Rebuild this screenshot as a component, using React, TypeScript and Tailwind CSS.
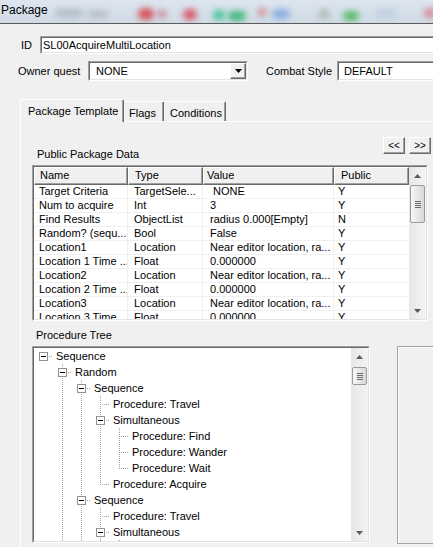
import React from "react";

const DOT_V =
  "bg-[image:repeating-linear-gradient(to_bottom,#a0a0a0_0px,#a0a0a0_1px,transparent_1px,transparent_2px)]";
const DOT_H =
  "bg-[image:repeating-linear-gradient(to_right,#a0a0a0_0px,#a0a0a0_1px,transparent_1px,transparent_2px)]";

// Blurred shapes showing through the glass caption
const glassSpots = [
  "left-[55px] top-[9px] w-[28px] h-[8px] bg-[#7b8794] opacity-40",
  "left-[88px] top-[10px] w-[20px] h-[8px] bg-[#8a8f96] opacity-40",
  "left-[138px] top-[8px] w-[16px] h-[12px] bg-[#d8323a] opacity-80",
  "left-[158px] top-[10px] w-[8px] h-[8px] bg-[#c04050] opacity-60",
  "left-[183px] top-[9px] w-[14px] h-[11px] bg-[#d83040] opacity-75",
  "left-[213px] top-[10px] w-[12px] h-[10px] bg-[#20c080] opacity-80",
  "left-[228px] top-[11px] w-[18px] h-[10px] bg-[#20b060] opacity-80",
  "left-[258px] top-[8px] w-[8px] h-[8px] bg-[#d04848] opacity-60",
  "left-[272px] top-[9px] w-[18px] h-[10px] bg-[#5a8ede] opacity-60",
  "left-[318px] top-[9px] w-[12px] h-[10px] bg-[#8a9a8a] opacity-50",
  "left-[343px] top-[11px] w-[16px] h-[10px] bg-[#30b040] opacity-75",
  "left-[375px] top-[8px] w-[22px] h-[10px] bg-[#b4c6dc] opacity-60",
  "left-[424px] top-[8px] w-[12px] h-[10px] bg-[#d05060] opacity-60",
];

const tableRows: [string, string, string, string][] = [
  ["Target Criteria", "TargetSele...", " NONE", "Y"],
  ["Num to acquire", "Int", "3", "Y"],
  ["Find Results", "ObjectList", "radius 0.000[Empty]", "N"],
  ["Random? (sequ...", "Bool", "False", "Y"],
  ["Location1", "Location", "Near editor location, ra...", "Y"],
  ["Location 1 Time ...", "Float", "0.000000", "Y"],
  ["Location2", "Location", "Near editor location, ra...", "Y"],
  ["Location 2 Time ...", "Float", "0.000000", "Y"],
  ["Location3", "Location", "Near editor location, ra...", "Y"],
  ["Location 3 Time ...", "Float", "0.000000", "Y"],
];

const colWidths = ["w-[94px]", "w-[75px]", "w-[131px]", "w-[75px]"];
const headPad = ["pl-[5px]", "pl-[6px]", "pl-[3px]", "pl-[6px]"];
const cellPad = ["pl-[5px]", "pl-[6px]", "pl-[7px]", "pl-[4px]"];
const headers = ["Name", "Type", "Value", "Public"];

type TreeItem = {
  label: string;
  level: number;
  button?: boolean;
  top?: boolean;
  bottom?: boolean;
  rails: number[];
};

const treeItems: TreeItem[] = [
  { label: "Sequence", level: 0, button: true, rails: [] },
  { label: "Random", level: 1, button: true, top: true, bottom: true, rails: [] },
  { label: "Sequence", level: 2, button: true, top: true, bottom: true, rails: [1] },
  { label: "Procedure: Travel", level: 3, top: true, bottom: true, rails: [1, 2] },
  { label: "Simultaneous", level: 3, button: true, top: true, bottom: true, rails: [1, 2] },
  { label: "Procedure: Find", level: 4, top: true, bottom: true, rails: [1, 2, 3] },
  { label: "Procedure: Wander", level: 4, top: true, bottom: true, rails: [1, 2, 3] },
  { label: "Procedure: Wait", level: 4, top: true, rails: [1, 2, 3] },
  { label: "Procedure: Acquire", level: 3, top: true, rails: [1, 2] },
  { label: "Sequence", level: 2, button: true, top: true, bottom: true, rails: [1] },
  { label: "Procedure: Travel", level: 3, top: true, bottom: true, rails: [1, 2] },
  { label: "Simultaneous", level: 3, button: true, top: true, bottom: true, rails: [1, 2] },
  { label: "Procedure: Find", level: 4, top: true, bottom: true, rails: [1, 2, 3] },
];

function Sunken({ className, children }: { className?: string; children?: React.ReactNode }) {
  return (
    <div
      className={`border border-t-[#a0a0a0] border-l-[#a0a0a0] border-r-white border-b-white ${className ?? ""}`}
    >
      <div className="h-full w-full border border-t-[#696969] border-l-[#696969] border-r-[#e3e3e3] border-b-[#e3e3e3] overflow-hidden">
        {children}
      </div>
    </div>
  );
}

function Raised({ className, children }: { className?: string; children?: React.ReactNode }) {
  return (
    <div
      className={`flex items-center justify-center border border-t-white border-l-white border-r-[#696969] border-b-[#696969] bg-[#f0f0f0] shadow-[inset_-1px_-1px_0_#a0a0a0] ${className ?? ""}`}
    >
      {children}
    </div>
  );
}

function Arrow({ up }: { up?: boolean }) {
  return (
    <svg width="7" height="4" viewBox="0 0 7 4">
      {up ? (
        <path d="M0 4 L3.5 0 L7 4 Z" fill="#5b5b5b" />
      ) : (
        <path d="M0 0 L7 0 L3.5 4 Z" fill="#5b5b5b" />
      )}
    </svg>
  );
}

function ScrollBar({ thumbTop, thumbH }: { thumbTop: string; thumbH: string }) {
  return (
    <div className="flex h-full w-[17px] shrink-0 flex-col bg-gradient-to-r from-[#e6e6e6] to-[#f4f4f4]">
      <div className="flex h-[17px] shrink-0 items-center justify-center">
        <Arrow up />
      </div>
      <div className="flex-1">
        <div
          className={`${thumbTop} ${thumbH} mx-[1px] flex flex-col items-center justify-center gap-[1px] rounded-[2px] border border-[#9a9a9a] bg-gradient-to-r from-[#f7f7f7] to-[#d8d8d8]`}
        >
          <div className="h-px w-[6px] bg-[#6a6a6a]" />
          <div className="h-px w-[6px] bg-[#6a6a6a]" />
          <div className="h-px w-[6px] bg-[#6a6a6a]" />
          <div className="h-px w-[6px] bg-[#6a6a6a]" />
        </div>
      </div>
      <div className="flex h-[17px] shrink-0 items-center justify-center">
        <Arrow />
      </div>
    </div>
  );
}

function DataTable() {
  return (
    <Sunken className="ml-[11px] h-[156px] w-[396px] bg-white">
      <div className="flex h-full bg-white">
        <div className="w-[375px] overflow-hidden">
          <div className="flex h-[18px] bg-[#f0f0f0]">
            {headers.map((h, i) => (
              <div
                key={h}
                className={`${colWidths[i]} ${headPad[i]} h-full shrink-0 border-l border-t border-l-white border-t-white border-r border-b border-r-[#696969] border-b-[#696969] shadow-[inset_-1px_-1px_0_#a0a0a0] leading-[15px]`}
              >
                {h}
              </div>
            ))}
          </div>
          {tableRows.map((r, ri) => (
            <div key={ri} className="flex h-[14px] border-b border-[#f0f0f0]">
              {r.map((c, ci) => (
                <div
                  key={ci}
                  className={`${colWidths[ci]} ${cellPad[ci]} shrink-0 overflow-hidden whitespace-pre leading-[13px] ${
                    ci < 3 ? "border-r border-[#f0f0f0]" : ""
                  }`}
                >
                  {c}
                </div>
              ))}
            </div>
          ))}
        </div>
        <ScrollBar thumbTop="mt-[1px]" thumbH="h-[38px]" />
      </div>
    </Sunken>
  );
}

function TreeRow({ item }: { item: TreeItem }) {
  const cols = Array.from({ length: item.level + 1 }, (_, i) => i);
  return (
    <div className="flex h-[16px] shrink-0 items-center">
      {cols.map((c) => (
        <div key={c} className="relative h-full w-[19px] shrink-0">
          {c < item.level && item.rails.includes(c) && (
            <div className={`absolute left-[9px] top-0 h-full w-px ${DOT_V}`} />
          )}
          {c === item.level && (
            <>
              {item.top && <div className={`absolute left-[9px] top-0 h-[8px] w-px ${DOT_V}`} />}
              {item.bottom && (
                <div className={`absolute left-[9px] top-[8px] h-[8px] w-px ${DOT_V}`} />
              )}
              <div className={`absolute left-[9px] top-[8px] h-px w-[10px] ${DOT_H}`} />
              {item.button && (
                <div className="absolute left-[5px] top-[4px] h-[9px] w-[9px] border border-[#919191] bg-white">
                  <div className="absolute left-[1px] top-[3px] h-px w-[5px] bg-black" />
                </div>
              )}
            </>
          )}
        </div>
      ))}
      <span className="ml-[3px] whitespace-nowrap leading-[16px]">{item.label}</span>
    </div>
  );
}

function ProcedureTree() {
  return (
    <Sunken className="ml-[11px] h-[197px] w-[338px] bg-white">
      <div className="flex h-full bg-white">
        <div className="flex w-[317px] flex-col overflow-hidden">
          {treeItems.map((it, i) => (
            <TreeRow key={i} item={it} />
          ))}
        </div>
        <ScrollBar thumbTop="mt-[2px]" thumbH="h-[18px]" />
      </div>
    </Sunken>
  );
}

export default function App() {
  return (
    <div className="relative h-[547px] w-[433px] overflow-hidden bg-[#f0f0f0] font-['Liberation_Sans','Arial',sans-serif] text-[11px] text-black">
      {/* caption */}
      <div className="relative h-[24px] overflow-hidden border-b border-[#5b5b5b] bg-gradient-to-b from-[#dde6ef] to-[#cfdae5]">
        {glassSpots.map((s, i) => (
          <div key={i} className={`absolute rounded-full blur-[3px] ${s}`} />
        ))}
        <span className="relative pl-[1px] text-[12px] leading-[20px] text-black">Package</span>
      </div>

      {/* ID */}
      <div className="mt-[12px] flex h-[18px] items-center pl-[21px]">
        <span className="w-[19px] shrink-0">ID</span>
        <Sunken className="h-[18px] w-[420px] shrink-0 bg-white">
          <div className="pl-[1px] leading-[14px] bg-white h-full">SL00AcquireMultiLocation</div>
        </Sunken>
      </div>

      {/* owner quest / combat style */}
      <div className="mt-[7px] flex h-[20px] items-center pl-[18px]">
        <span className="w-[70px] shrink-0">Owner quest</span>
        <Sunken className="h-[20px] w-[160px] shrink-0 bg-white">
          <div className="flex h-full items-center bg-white">
            <span className="flex-1 pl-[6px] leading-[16px]">NONE</span>
            <Raised className="h-[16px] w-[16px] shrink-0">
              <svg width="7" height="4" viewBox="0 0 7 4">
                <path d="M0 0 L7 0 L3.5 4 Z" fill="#000" />
              </svg>
            </Raised>
          </div>
        </Sunken>
        <span className="ml-[18px] w-[71px] shrink-0">Combat Style</span>
        <Sunken className="h-[20px] w-[120px] shrink-0 bg-white">
          <div className="h-full bg-white pl-[5px] leading-[16px]">DEFAULT</div>
        </Sunken>
      </div>

      {/* tabs */}
      <div className="ml-[20px] mt-[18px] flex h-[22px] items-end">
        <div className="relative z-10 -mb-px h-[23px] w-[104px] shrink-0 rounded-t-[2px] border-l border-t border-white border-r border-r-[#696969] bg-[#f0f0f0] pl-[7px] pt-[4px] leading-[14px] shadow-[inset_-1px_0_0_#a0a0a0]">
          Package Template
        </div>
        <div className="h-[20px] w-[40px] shrink-0 rounded-t-[2px] border-t border-white border-r border-r-[#696969] pl-[5px] pt-[4px] leading-[14px] shadow-[inset_-1px_0_0_#a0a0a0]">
          Flags
        </div>
        <div className="h-[20px] w-[62px] shrink-0 rounded-t-[2px] border-t border-white border-r border-r-[#696969] pl-[6px] pt-[4px] leading-[14px] shadow-[inset_-1px_0_0_#a0a0a0]">
          Conditions
        </div>
      </div>

      {/* tab page */}
      <div className="ml-[20px] w-[440px] border-l border-t border-white pb-[20px]">
        <div className="mt-[15px] flex h-[28px] w-[410px] items-end">
          <span className="mb-[4px] ml-[16px] leading-[13px]">Public Package Data</span>
          <div className="mb-[11px] ml-auto flex gap-[4px]">
            <Raised className="h-[17px] w-[22px] text-[10px] leading-none">&lt;&lt;</Raised>
            <Raised className="h-[17px] w-[22px] text-[10px] leading-none">&gt;&gt;</Raised>
          </div>
        </div>

        <DataTable />

        <div className="ml-[15px] mt-[8px] leading-[13px]">Procedure Tree</div>

        <div className="mt-[4px] flex">
          <ProcedureTree />
          <div className="ml-[27px] h-[198px] w-[60px] shrink-0 border border-[#a3a3a3] bg-[#f0f0f0] shadow-[inset_1px_1px_0_#ffffff]" />
        </div>
      </div>
    </div>
  );
}
